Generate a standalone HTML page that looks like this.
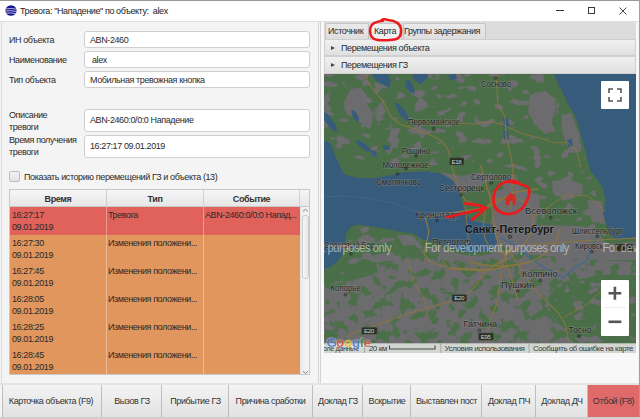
<!DOCTYPE html>
<html><head><meta charset="utf-8">
<style>
*{margin:0;padding:0;box-sizing:border-box}
html,body{width:640px;height:419px;overflow:hidden;background:#f4f4f4}
body{position:relative;font-family:"Liberation Sans",sans-serif;font-size:9px;letter-spacing:-0.4px;color:#2a2a2a}
.a{position:absolute;white-space:nowrap}
#title{left:0;top:0;width:640px;height:21px;background:#fff;border-top:1px solid #9a9a9a}
.fld{position:absolute;left:84px;width:226px;background:#fff;border:1px solid #cfcfcf;border-radius:3px}
.lbl{position:absolute;left:9px;line-height:12px}
.ftx{position:absolute;line-height:12px}
#tbl{position:absolute;left:9px;top:189px;width:301px;height:186px;border:1px solid #c8c8c8;background:#fff;overflow:hidden}
.hdr{position:absolute;top:0;height:17px;background:linear-gradient(#f6f6f6,#e6e6e6);border-right:1px solid #d0d0d0;border-bottom:1px solid #c8c8c8;font-weight:bold;text-align:center;line-height:19px;color:#333}
.row{position:absolute;left:0;width:290px;height:28px}
.cell{position:absolute;top:0;height:28px;line-height:12px;padding-top:2px}
.btn{position:absolute;top:385px;height:33px;background:linear-gradient(#f3f3f3,#e2e2e2);border-left:1px solid #bdbdbd;text-align:center;line-height:33px;color:#333}
</style></head><body>
<div id="title"></div>
<!-- globe icon -->
<svg class="a" style="left:5px;top:5px" width="12" height="11" viewBox="0 0 12 11">
<ellipse cx="6" cy="5.5" rx="5.6" ry="5.3" fill="#17188c"/>
<path d="M0.6 4 Q5 2.8 11.6 4.2 M0.4 6.1 Q5 5 11.8 6.5 M1.2 8.2 Q5.5 7.3 11 8.8" stroke="#eef" stroke-width="0.75" fill="none"/>
</svg>
<div class="a" style="left:20px;top:4.5px;line-height:12px;color:#222">Тревога: "Нападение" по объекту:&nbsp; alex</div>
<!-- window controls -->
<div class="a" style="left:556px;top:10px;width:8px;height:1px;background:#333"></div>
<div class="a" style="left:588px;top:7px;width:7px;height:7px;border:1px solid #3a3a3a"></div>
<svg class="a" style="left:619px;top:7px" width="8" height="8" viewBox="0 0 8 8"><path d="M0.5 0.5L7.5 7.5M7.5 0.5L0.5 7.5" stroke="#333" stroke-width="0.9"/></svg>
<div class="a" style="left:639px;top:0;width:1px;height:419px;background:#a0a0a0"></div>
<div class="a" style="left:0;top:21px;width:639px;height:1px;background:#dedede"></div>
<div class="a" style="left:1px;top:21px;width:1px;height:364px;background:#dcdcdc"></div>

<!-- left form -->
<div class="lbl" style="top:34px">ИН объекта</div>
<div class="fld" style="top:31px;height:17px"></div>
<div class="ftx" style="left:90px;top:34px">ABN-2460</div>
<div class="lbl" style="top:54px">Наименование</div>
<div class="fld" style="top:51px;height:17px"></div>
<div class="ftx" style="left:92px;top:54px">alex</div>
<div class="lbl" style="top:74px">Тип объекта</div>
<div class="fld" style="top:71px;height:17px"></div>
<div class="ftx" style="left:90px;top:74px">Мобильная тревожная кнопка</div>

<div class="lbl" style="top:109px">Описание<br>тревоги</div>
<div class="fld" style="top:109px;height:23px"></div>
<div class="ftx" style="left:90px;top:114px">ABN-2460:0/0:0 Нападение</div>
<div class="lbl" style="top:134px">Время получения<br>тревоги</div>
<div class="fld" style="top:135px;height:23px"></div>
<div class="ftx" style="left:90px;top:140px">16:27:17 09.01.2019</div>

<div class="a" style="left:9px;top:171px;width:11px;height:11px;border:1px solid #bdbdbd;border-radius:2px;background:linear-gradient(#f2f2f2,#e2e2e2)"></div>
<div class="a" style="left:24px;top:171px;line-height:12px">Показать историю перемещений ГЗ и объекта (13)</div>

<div id="tbl">
 <div class="hdr" style="left:0;width:97px">Время</div>
 <div class="hdr" style="left:97px;width:97px">Тип</div>
 <div class="hdr" style="left:194px;width:96px">Событие</div>
 <div class="hdr" style="left:290px;width:11px;border-right:0"></div>
 <div class="row" style="top:17px;background:#e0625a">
  <div class="cell" style="left:2px">16:27:17<br>09.01.2019</div>
  <div class="cell" style="left:98px">Тревога</div>
  <div class="cell" style="left:195px">ABN-2460:0/0:0 Напад...</div>
 </div>
 <div class="row" style="top:45px;background:#e0965c"><div class="cell" style="left:2px">16:27:30<br>09.01.2019</div><div class="cell" style="left:98px">Изменения положени...</div></div>
 <div class="row" style="top:73px;background:#e0965c"><div class="cell" style="left:2px">16:27:45<br>09.01.2019</div><div class="cell" style="left:98px">Изменения положени...</div></div>
 <div class="row" style="top:101px;background:#e0965c"><div class="cell" style="left:2px">16:28:05<br>09.01.2019</div><div class="cell" style="left:98px">Изменения положени...</div></div>
 <div class="row" style="top:129px;background:#e0965c"><div class="cell" style="left:2px">16:28:25<br>09.01.2019</div><div class="cell" style="left:98px">Изменения положени...</div></div>
 <div class="row" style="top:157px;background:#e0965c"><div class="cell" style="left:2px">16:28:45<br>09.01.2019</div><div class="cell" style="left:98px">Изменения положени...</div></div>
 <div class="a" style="left:96px;top:17px;width:1px;height:170px;background:rgba(255,255,255,.35)"></div>
 <div class="a" style="left:193px;top:17px;width:1px;height:170px;background:rgba(255,255,255,.35)"></div>
 <div class="a" style="left:290px;top:17px;width:10px;height:168px;background:linear-gradient(90deg,#ececec,#f6f6f6);border-left:1px solid #e4e4e4"></div>
 <div class="a" style="left:292px;top:25px;width:7px;height:64px;border:1px solid #cdcdcd;border-radius:3px;background:linear-gradient(90deg,#f8f8f8,#e8e8e8)"></div>
 <svg class="a" style="left:292px;top:18px" width="7" height="5" viewBox="0 0 7 5"><path d="M1 3.5L3.5 1.2L6 3.5" stroke="#777" stroke-width="0.9" fill="none"/></svg>
 <svg class="a" style="left:292px;top:180px" width="7" height="5" viewBox="0 0 7 5"><path d="M1 1.2L3.5 3.5L6 1.2" stroke="#777" stroke-width="0.9" fill="none"/></svg>
</div>

<!-- splitter -->
<div class="a" style="left:318px;top:22px;width:1px;height:362px;background:#d4d4d4"></div>
<div class="a" style="left:320px;top:22px;width:1px;height:362px;background:#d4d4d4"></div>

<!-- right panel -->
<div class="a" style="left:321px;top:22px;width:317px;height:362px;background:#f8f8f8"></div>
<div class="a" style="left:324px;top:22px;width:312px;height:17px;background:#dcdcdc"></div>
<div class="a" style="left:325px;top:23px;width:44px;height:16px;background:linear-gradient(#eaeaea,#dedede);border:1px solid #c4c4c4;border-bottom:0;border-radius:2px 2px 0 0"></div>
<div class="a" style="left:328px;top:25px;line-height:12px">Источник</div>
<div class="a" style="left:370px;top:23px;width:32px;height:17px;background:#f0f0f0;border:1px solid #c4c4c4;border-bottom:0;border-radius:2px 2px 0 0"></div>
<div class="a" style="left:374px;top:25px;line-height:12px">Карта</div>
<div class="a" style="left:403px;top:23px;width:83px;height:16px;background:linear-gradient(#eaeaea,#dedede);border:1px solid #c4c4c4;border-bottom:0;border-radius:2px 2px 0 0"></div>
<div class="a" style="left:404px;top:25px;line-height:12px">Группы задержания</div>

<div class="a" style="left:324px;top:39px;width:312px;height:17px;background:linear-gradient(#f0f0f0,#e0e0e0);border:1px solid #cfcfcf"></div>
<div class="a" style="left:331px;top:46px;width:0;height:0;border-left:4px solid #444;border-top:2.5px solid transparent;border-bottom:2.5px solid transparent"></div>
<div class="a" style="left:341px;top:42px;line-height:12px">Перемещения объекта</div>
<div class="a" style="left:324px;top:56px;width:312px;height:18px;background:linear-gradient(#f0f0f0,#e0e0e0);border:1px solid #cfcfcf"></div>
<div class="a" style="left:331px;top:63px;width:0;height:0;border-left:4px solid #444;border-top:2.5px solid transparent;border-bottom:2.5px solid transparent"></div>
<div class="a" style="left:341px;top:59px;line-height:12px">Перемещения ГЗ</div>

<!-- MAP -->
<svg class="a" style="left:324px;top:74px" width="312" height="279" viewBox="324 74 312 279" font-family="Liberation Sans, sans-serif">
<rect x="324" y="74" width="312" height="279" fill="#4b6f48"/>
<defs><filter id="bl" filterUnits="userSpaceOnUse" x="320" y="70" width="320" height="290"><feGaussianBlur stdDeviation="0.8"/></filter><clipPath id="mapc"><rect x="324" y="74" width="312" height="279"/></clipPath></defs>
<g clip-path="url(#mapc)"><g>
<rect x="324" y="74" width="312" height="279" fill="#4a6e47"/>
<g fill="#6c6b6e">
<!-- big gray blobs north -->
<path d="M343 104 L350 90 L360 87 L367 95 L366 103 L371 110 L373 118 L370 129 L363 126 L357 118 L347 115Z"/>
<path d="M561 115 L571 113 L579 133 L581 152 L570 153 L563 135Z"/>
<path d="M564 120 L571 119 L577 131 L578 145 L569 146 L565 133Z"/>
<path d="M530 95 L545 91 L556 99 L555 112 L550 120 L556 131 L545 134 L535 125 L528 112Z"/>
<path d="M552 181 L568 179 L583 185 L582 196 L566 195 L553 193Z"/>
<!-- city -->
<path d="M462 176 L480 172 L490 180 L480 186 L470 186Z"/><path d="M500 176 L516 174 L520 186 L504 190Z"/>
<path d="M466 214 L474 220 L492 224 L494 232 L480 236 L468 230Z"/>
<path d="M500 190 L520 186 L532 192 L540 200 L536 226 L532 260 L494 260 L494 228 L490 224 L494 210 L492 198Z"/>
<path d="M440 172 L462 176 L470 186 L466 196 L458 188 L452 180Z"/>

<path d="M587 200 L602 201 L605 224 L592 222Z"/>
<path d="M532 225 L580 226 L598 232 L606 244 L600 260 L532 260Z"/>
<path d="M600 244 L636 242 L636 260 L600 260Z"/>
<!-- south base gray -->
<path d="M324 285 L345 282 L372 275 L400 262 L420 250 L440 246 L452 252 L470 256 L490 254 L500 246 L532 255 L600 260 L636 262 L636 275 L600 275 L560 283 L548 298 L552 318 L566 330 L580 353 L324 353Z"/>
<path d="M396 235 L413 236 L420 244 L404 246Z"/><path d="M374 255 L392 252 L404 262 L396 273 L378 272Z"/>
</g>
<g fill="#4a6e47">
<path d="M462 192 L476 194 L486 206 L480 214 L468 210Z"/>
<path d="M540 200 L552 195 L560 215 L548 222Z"/>
<path d="M560 283 L636 275 L636 343 L580 343 L566 330 L552 318 L548 298Z"/>
</g>
<defs>
<filter id="t1" filterUnits="userSpaceOnUse" x="324" y="74" width="312" height="279" color-interpolation-filters="sRGB">
<feTurbulence type="fractalNoise" baseFrequency="0.075 0.11" numOctaves="2" seed="11" result="n"/>
<feColorMatrix in="n" type="matrix" values="0 0 0 0 0.427  0 0 0 0 0.424  0 0 0 0 0.435  1 0 0 0 0"/>
<feComponentTransfer><feFuncA type="linear" slope="14" intercept="-8.15"/></feComponentTransfer>
</filter>
<filter id="t2" filterUnits="userSpaceOnUse" x="324" y="74" width="312" height="279" color-interpolation-filters="sRGB">
<feTurbulence type="fractalNoise" baseFrequency="0.1" numOctaves="3" seed="5" result="n"/>
<feColorMatrix in="n" type="matrix" values="0 0 0 0 0.294  0 0 0 0 0.435  0 0 0 0 0.282  1 0 0 0 0"/>
<feComponentTransfer><feFuncA type="linear" slope="14" intercept="-7.5"/></feComponentTransfer>
</filter>
<clipPath id="northc"><path d="M324 74 H554 L590 170 L606 236 L532 226 L494 210 L470 160 L428 166 L392 167 L324 150Z"/></clipPath>
<clipPath id="eastc"><path d="M324 268 L346 240 L360 225 L430 238 L440 246 L420 250 L400 262 L372 275 L345 282 L324 285Z"/><path d="M560 283 L636 275 L636 343 L580 343 L566 330 L552 318 L548 298Z"/><path d="M540 200 L552 195 L560 215 L548 222Z"/></clipPath>
<clipPath id="southc"><path d="M324 270 L338 262 L346 246 L356 244 L372 250 L400 248 L428 240 L440 246 L452 252 L470 256 L490 254 L500 246 L532 255 L600 260 L636 260 L636 353 L324 353Z"/></clipPath>
</defs>
<rect x="324" y="74" width="312" height="279" filter="url(#t1)" clip-path="url(#northc)"/>
<rect x="324" y="74" width="312" height="279" filter="url(#t2)" clip-path="url(#southc)"/>
<rect x="324" y="74" width="312" height="279" filter="url(#t1)" clip-path="url(#eastc)"/>
<!-- water -->
<g fill="#375b7b">
<path d="M324 140 L330 143 L333 150 L337 160 L340 166 L344 174 L350 176 L358 178 L375 178 L392 175 L404 172 L412 172 L428 171.4 L441 173.7 L452 180 L459 189 L461 200 L463.5 207 L466 213.6 L472 220 L481 222.4 L492 224.6 L495 234 L497 243 L490 251 L470 253 L452 249 L437 243 L424 240 L412.7 233.5 L397 231.3 L381.6 228 L368 225.8 L357 224.6 L350.6 227 L346 233.5 L345 244.6 L341.7 255.7 L337 262 L330 267 L324 270Z"/>
<path d="M554 74 L558 83.5 L564 95.5 L568.6 105 L575.8 117 L579.4 129 L583 143 L586.5 155 L590 170 L597.3 179.5 L603.2 189 L605.6 201 L603.2 213 L605.6 222.5 L609.2 234.4 L616.4 239.2 L630.7 238 L636 236.8 L636 74Z"/>
<path d="M372 74 L388 74 L391 80 L389 88 L382 84 L375 80Z"/>
<path d="M405 81 L410 80 L414 88 L415 94 L410 92 L406 87Z"/>
<path d="M413 74 L428 74 L426 80 L420 84 L414 80Z"/>
<path d="M395 103 L399 104 L406 112 L410 120 L406 121 L399 113Z"/>
<path d="M324 112 L329 115 L336 126 L337 132 L332 130 L324 120Z"/>
<path d="M351 110 L355 111 L359 118 L358 123 L353 118Z"/>
<path d="M356 140 L361 141 L370 148 L371 152 L366 151 L358 145Z"/>
<path d="M371 150 L376 151 L377 157 L372 156Z"/>
<path d="M383 145 L390 146 L390 150 L384 150Z"/>
<path d="M448 75 L456 74 L457 79 L450 80Z"/>
<path d="M503 117 L508 118 L509 127 L504 128Z"/>
<path d="M503 130 L508 131 L509 140 L504 139Z"/>
<path d="M567 140 L572 139 L573 146 L568 147Z"/>
</g>
<path d="M324 197 Q372 193 414 211" stroke="#6a8aa6" stroke-width="0.6" stroke-dasharray="2 1.6" fill="none" opacity="0.7"/>
<!-- neva -->
<path d="M598 236 L595 240 L591 249 L587 260 L576 267 L563 278 L545 268 L530 258 L515 245 L500 238" stroke="#3f6a94" stroke-width="1.3" fill="none"/>
<!-- roads -->
<g stroke="#8a7642" stroke-width="1.05" fill="none" stroke-linejoin="round" stroke-linecap="round">
<path d="M365 74 L368.3 83 L377.2 94 L383.9 102.8 L390.5 116 L399.4 123.9 L412.7 128.3 L428 133.9 L441.3 140.5 L448 149.4 L452 167 L458 185 L465 200 L486 208"/>
<path d="M496 74 L498 105 L505 116.6 L506 136 L508.8 147 L513 167 L512 190 L510 210"/>
<path d="M428 124 L454.6 122.8 L472.3 124 L492.3 121.7 L503.4 125 L523.3 134 L540.9 138.3 L554.2 142.7 L567.5 142.7 L576.3 149.4 L580.8 167" stroke-width="0.9"/>
<path d="M346 337.6 L352.8 333.2 L379.4 324.3 L401.6 315.4 L428 307.7 L452.4 301 L468 293.3 L476.8 284.4 L483.4 273.3 L494.5 264.4 L503.4 260 L510 250"/>
<path d="M408.3 260 L412.7 280 L421.6 293.3 L428 311" stroke-width="0.9"/>
<path d="M501 273.3 L496.7 304.3 L490 320 L483.4 353"/>
<path d="M532 286.6 L545.3 300 L558.6 313.2 L565.3 324.3 L568.6 342"/>
<path d="M563 317.6 L587.4 304.3 L600.7 291" stroke-width="0.9"/>
<path d="M441.3 260 L450 268.9 L483.4 271 L505.6 260"/>
<path d="M532 218 L565 195.8 L587.4 195.8 L598.5 204.7 L605 211" stroke-width="0.9"/>
<path d="M532 244.6 L576.3 241.3 L598.5 240 L636 238"/>
<path d="M486 208 C 492 198 512 192 528 205 C 540 218 530 248 510 252 C 490 256 478 240 486 208"/>
<path d="M465 200 L470 260" stroke-width="0.9"/>
<path d="M510 252 L532 286.6"/>
<path d="M425 217 L487 207.5 L515 192 L538 189" stroke-width="1.5"/>
<path d="M425 217 L429 231 L424 254 L430 262 L450 268 L490 270 L530 262" stroke-width="1.3"/>
<path d="M480.5 165.7 L491 200 L496 236.6 L506.7 260" stroke-width="1.4"/>
<path d="M470 262 Q500 270 530 262 Q555 252 560 230" stroke-width="1.3"/>
<path d="M505 260 L512 280 L518 300"/>
</g>
</g></g>
<!-- map labels -->
<g font-size="9" fill="#262626" letter-spacing="0" stroke="#9a9a9a" stroke-opacity="0.45" stroke-width="1.4" paint-order="stroke" stroke-linejoin="round">
<text x="481" y="87.3" textLength="30" lengthAdjust="spacingAndGlyphs">Сосново</text>
<text x="408" y="124.5" textLength="52" lengthAdjust="spacingAndGlyphs">Первомайское</text>
<text x="402" y="154" textLength="28" lengthAdjust="spacingAndGlyphs">Рощино</text>
<text x="382.5" y="167.5" textLength="46" lengthAdjust="spacingAndGlyphs">Молодежное</text>
<text x="376" y="185" textLength="45" lengthAdjust="spacingAndGlyphs">Смолячково</text>
<text x="439" y="191" textLength="45" lengthAdjust="spacingAndGlyphs">Сестрорецк</text>
<text x="471" y="179.5" textLength="40" lengthAdjust="spacingAndGlyphs">Сертолово</text>
<text x="415" y="218" textLength="44" lengthAdjust="spacingAndGlyphs">Кронштадт</text>
<text x="432" y="245" textLength="39" lengthAdjust="spacingAndGlyphs">Петергоф</text>
<text x="525" y="213.6" textLength="52" lengthAdjust="spacingAndGlyphs">Всеволожск</text>
<text x="572" y="233.5" textLength="51" lengthAdjust="spacingAndGlyphs">Шлиссельбург</text>
<text x="575" y="249" textLength="28" lengthAdjust="spacingAndGlyphs">Кировск</text>
<text x="522" y="276.6" textLength="35.5" lengthAdjust="spacingAndGlyphs">Колпино</text>
<text x="501" y="287.7" textLength="33" lengthAdjust="spacingAndGlyphs">Пушкин</text>
<text x="330.6" y="291" textLength="30" lengthAdjust="spacingAndGlyphs">Копорье</text>
<text x="463.5" y="326.5" textLength="33.7" lengthAdjust="spacingAndGlyphs">Гатчина</text>
<text x="568.6" y="333" textLength="22.8" lengthAdjust="spacingAndGlyphs">Тосно</text>
<text x="324" y="248" textLength="51" lengthAdjust="spacingAndGlyphs">Сосновый Бор</text>
<text x="465" y="233.3" font-size="11.8" font-weight="bold" fill="#151515" textLength="89" lengthAdjust="spacingAndGlyphs">Санкт-Петербург</text>
</g>
<g fill="none" stroke="#252525" stroke-width="0.8">
<circle cx="495.6" cy="78" r="1.3"/><circle cx="433.7" cy="128.7" r="1.3"/><circle cx="416" cy="156" r="1.3"/>
<circle cx="406" cy="168.7" r="1.3"/><circle cx="397.6" cy="174" r="1.3"/><circle cx="461.3" cy="194.7" r="1.3"/>
<circle cx="491.2" cy="183" r="1.3"/><circle cx="436.9" cy="220.2" r="1.3"/><circle cx="510" cy="236.8" r="1.6"/>
<circle cx="550.8" cy="217.6" r="1.3"/><circle cx="597.4" cy="236.2" r="1.3"/><circle cx="591.9" cy="251.7" r="1.3"/>
<circle cx="540.4" cy="280.4" r="1.3"/><circle cx="517.8" cy="291" r="1.3"/><circle cx="345.5" cy="294.8" r="1.3"/>
<circle cx="479.4" cy="330.5" r="1.3"/><circle cx="579" cy="336" r="1.3"/><circle cx="351" cy="253.7" r="1.3"/>
</g>
<!-- shields -->
<g fill="#263226" stroke="#5a5a50" stroke-width="0.5">
<rect x="449.5" y="157.8" width="14.5" height="7.2" rx="1"/>
<rect x="361.7" y="327.2" width="15.5" height="7.1" rx="1"/>
<rect x="452" y="294.4" width="14.8" height="7.1" rx="1"/>
<rect x="478.5" y="333" width="14.9" height="7.3" rx="1"/>
<rect x="615" y="244" width="19" height="7" rx="1"/>
</g>
<g font-size="6.2" fill="#d0d0c8">
<text x="451.5" y="163.6">E18</text><text x="364" y="333">E20</text><text x="454.3" y="300.3">E20</text><text x="480.7" y="339">E95</text>
</g>
<!-- watermark -->
<g font-size="12.6" fill="#ffffff" fill-opacity="0.5">
<text x="247.5" y="252.2" textLength="144" lengthAdjust="spacingAndGlyphs">For development purposes only</text>
<text x="425" y="252.2" textLength="144" lengthAdjust="spacingAndGlyphs">For development purposes only</text>
<text x="602.5" y="252.2" textLength="144" lengthAdjust="spacingAndGlyphs">For development purposes only</text>
</g>
<!-- attribution bar -->
<rect x="324" y="343.3" width="312" height="9.7" fill="#d3d6d0"/>
<g font-size="7.2" fill="#3a3a3a">
<text x="323" y="350.8" textLength="35.5" lengthAdjust="spacingAndGlyphs">оле данные</text>
<text x="368.8" y="350.8" textLength="18" lengthAdjust="spacingAndGlyphs">20 км</text>
<text x="444.5" y="350.8" textLength="80" lengthAdjust="spacingAndGlyphs">Условия использования</text>
<text x="533" y="350.8" textLength="100" lengthAdjust="spacingAndGlyphs">Сообщить об ошибке на карте</text>
</g>
<path d="M389.5 345.5 L389.5 349 L435 349 L435 345.5" stroke="#4a4a4a" stroke-width="1.1" fill="none"/>
<g stroke="#9a9e98" stroke-width="0.8"><path d="M364.5 343.5V353M440.8 343.5V353M529 343.5V353"/></g>
<!-- google logo -->
<g font-size="13.5" font-weight="bold" stroke="#ffffff" stroke-width="1" stroke-opacity="0.55" paint-order="stroke" opacity="0.85">
<text x="326.5" y="346.5" fill="#4a7bd0">G</text><text x="336" y="346.5" fill="#d24b3b">o</text><text x="344" y="346.5" fill="#e6b52a">o</text><text x="352" y="346.5" fill="#4a7bd0">g</text><text x="360" y="346.5" fill="#3c9c4c">l</text><text x="363.5" y="346.5" fill="#d24b3b">e</text>
</g>
<!-- controls -->
<rect x="601" y="81" width="28" height="28" rx="1" fill="#fff"/>
<path d="M609 93V89H613M617 89H621V93M621 97V101H617M613 101H609V97" stroke="#555" stroke-width="1.6" fill="none"/>
<rect x="601" y="280" width="28" height="56" rx="1" fill="#fff"/>
<path d="M604 307.6H626" stroke="#e6e6e6" stroke-width="0.8"/>
<path d="M608.5 293.2H621.3M614.9 286.7V299.7" stroke="#555" stroke-width="2.6"/>
<path d="M608.5 321.8H621.3" stroke="#555" stroke-width="2.6"/>
<!-- red annotation -->
<g fill="#d42a24">
<path d="M510.7 192.8 L504.5 199.4 L506 199.4 L506 205 L515.4 205 L515.4 199.4 L516.9 199.4Z"/><rect x="513.2" y="194" width="1.6" height="3"/>
</g>
<rect x="509.6" y="200.8" width="3" height="4.2" fill="#7a6a6a"/>
<g stroke="#ec1a1c" stroke-width="2.7" fill="none" stroke-linecap="round">
<path d="M519 182.5 C 514 180.5 507 180.5 501 184 C 495.5 188 493 195 493.5 202 C 494.5 209 500 214 508 214 C 516 214 523 209 527 201 C 530 194 530.5 188 526 186 C 522 184.5 516 182 506 181.5"/>
<path d="M447.3 217.3 L486.4 208 M465 203.6 Q477 204 486.4 208 M471.8 220 L485 209"/>
</g>
</svg>


<svg class="a" style="left:360px;top:14px" width="50" height="32" viewBox="360 14 50 32"><path d="M381 20.5 C 383 19 386 19.3 388 20 C 394 20.5 400 22.5 401 29 C 401.5 35 400 39.2 392 39.8 C 385 40.6 377 40.5 373.5 38.6 C 370 36.5 369.5 31 370.5 27.5 C 371.5 23.5 376 21.5 383 20.8" stroke="#ec1a1c" stroke-width="2.5" fill="none" stroke-linecap="round"/></svg>
<!-- bottom buttons -->
<div class="a" style="left:0;top:383px;width:639px;height:2px;background:#e4e4e4"></div>
<div class="btn" style="left:2px;width:100px;padding-right:3px">Карточка объекта (F9)</div>
<div class="btn" style="left:101px;width:61px">Вызов ГЗ</div>
<div class="btn" style="left:161px;width:68px">Прибытие ГЗ</div>
<div class="btn" style="left:228px;width:84px">Причина сработки</div>
<div class="btn" style="left:312px;width:51px">Доклад ГЗ</div>
<div class="btn" style="left:362px;width:49px">Вскрытие</div>
<div class="btn" style="left:410px;width:72px">Выставлен пост</div>
<div class="btn" style="left:481px;width:55px">Доклад ПЧ</div>
<div class="btn" style="left:535px;width:53px">Доклад ДЧ</div>
<div class="btn" style="left:587px;width:52px;background:#e06a6a">Отбой (F8)</div>
<div class="a" style="left:0;top:417px;width:640px;height:2px;background:#cfcfcf"></div>
</body></html>
